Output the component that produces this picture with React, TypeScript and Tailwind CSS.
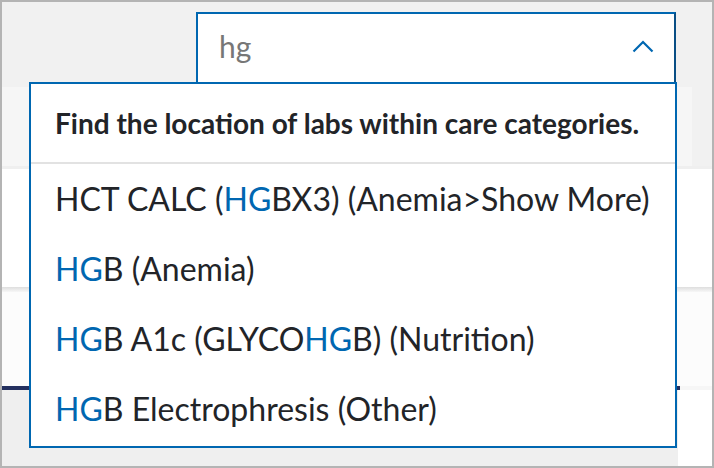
const BLUE = "#0067b1";

type Part = { t: string; hit?: boolean };

const RESULTS: Part[][] = [
  [{ t: "HCT CALC (" }, { t: "HG", hit: true }, { t: "BX3) (Anemia>Show More)" }],
  [{ t: "HG", hit: true }, { t: "B (Anemia)" }],
  [{ t: "HG", hit: true }, { t: "B A1c (GLYCO" }, { t: "HG", hit: true }, { t: "B) (Nutrition)" }],
  [{ t: "HG", hit: true }, { t: "B Electrophresis (Other)" }],
];

function ResultRow({ parts }: { parts: Part[] }) {
  return (
    <div className="h-[70px] flex items-center pl-6 text-[32px] leading-none text-[#222428] whitespace-nowrap">
      {parts.map((p, i) => (
        <span key={i} className={p.hit ? "text-[#0067b1]" : undefined}>{p.t}</span>
      ))}
    </div>
  );
}

export default function App() {
  return (
    <div
      className="relative w-[714px] h-[468px] overflow-hidden border-2 border-[#b4b4b4] bg-[#f1f1f1] flex flex-col"
      style={{ fontFamily: "Lato, 'Open Sans', sans-serif" }}
    >
      {/* ── background page ── */}
      <div className="h-[85px] shrink-0" />
      <div className="h-[79px] shrink-0 flex">
        <div className="w-[690px] bg-[#f6f6f6]" />
      </div>
      <div className="h-[3px] shrink-0 bg-[#efefef]" />
      <div className="h-[118px] shrink-0 bg-white" />
      <div className="h-[5px] shrink-0 bg-gradient-to-b from-[#dedede] to-[#f7f7f7]" />
      <div className="h-[94px] shrink-0 bg-[#fcfcfc]" />
      <div className="h-[4px] shrink-0 flex">
        <div className="w-[678px] bg-[#24305f]" />
        <div className="flex-1 bg-[#f6f6f6]" />
      </div>
      <div className="flex-1 flex">
        <div className="w-[676px] bg-[#efefef]" />
        <div className="flex-1 bg-white" />
      </div>

      {/* ── search input ── */}
      <div className="absolute left-[194px] top-[10px] w-[480px] h-[72px] border-2 bg-white flex items-center justify-between pl-[21px] pr-[20px] border-[#0067b1] border-r-[#0a4f85]">
        <span className="text-[30px] text-[#777] leading-none pb-1">hg</span>
        <svg width="22" height="13" viewBox="0 0 22 13" fill="none" className="mb-1">
          <polyline points="1.5,11.5 11,2 20.5,11.5" stroke={BLUE} strokeWidth="2.2" />
        </svg>
      </div>

      {/* ── dropdown list ── */}
      <div className="absolute left-[27px] top-[80px] w-[648px] h-[366px] border-2 border-[#0067b1] bg-white">
        <div className="h-[80px] flex items-center pl-6 text-[28px] leading-none font-bold text-[#222428] border-b-2 border-[#e2e2e2] whitespace-nowrap">
          Find the location of labs within care categories.
        </div>
        {RESULTS.map((r, i) => (
          <ResultRow key={i} parts={r} />
        ))}
      </div>
    </div>
  );
}
